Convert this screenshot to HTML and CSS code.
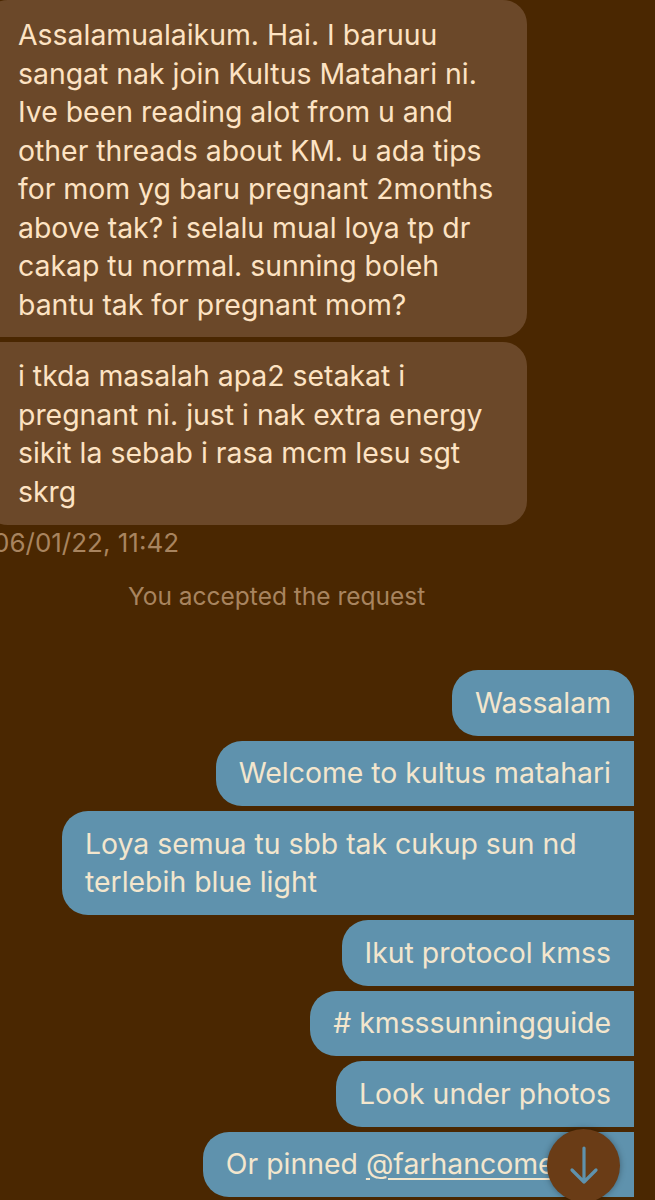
FILE: index.html
```html
<!DOCTYPE html>
<html>
<head>
<meta charset="utf-8">
<link rel="stylesheet" href="styles.css">
</head>
<body>
<div class="screen">
  <div class="recv-group">
    <div class="bubble recv first">Assalamualaikum. Hai. I baruuu<br>sangat nak join Kultus Matahari ni.<br>Ive been reading alot from u and<br>other threads about KM. u ada tips<br>for mom yg baru pregnant 2months<br>above tak? i selalu mual loya tp dr<br>cakap tu normal. sunning boleh<br>bantu tak for pregnant mom?</div>
    <div class="bubble recv last">i tkda masalah apa2 setakat i<br>pregnant ni. just i nak extra energy<br>sikit la sebab i rasa mcm lesu sgt<br>skrg</div>
  </div>
  <div class="timestamp">06/01/22, 11:42</div>
  <div class="notice">You accepted the request</div>
  <div class="sent-group">
    <div class="bubble sent first">Wassalam</div>
    <div class="bubble sent">Welcome to kultus matahari</div>
    <div class="bubble sent wide">Loya semua tu sbb tak cukup sun nd<br>terlebih blue light</div>
    <div class="bubble sent">Ikut protocol kmss</div>
    <div class="bubble sent"># kmsssunningguide</div>
    <div class="bubble sent">Look under photos</div>
    <div class="bubble sent">Or pinned <span class="link">@farhancomedyy.</span></div>
  </div>
  <button class="scroll-down" aria-label="Scroll down">
    <svg width="40" height="40" viewBox="0 0 40 40"><path d="M20 2 V36 M8 24 L20 36 L32 24" fill="none" stroke="#5f92ad" stroke-width="3.2" stroke-linecap="round" stroke-linejoin="round"/></svg>
  </button>
</div>
</body>
</html>
```
FILE: styles.css
```css
html, body {
  margin: 0;
  padding: 0;
  background: #4a2701;
}
.screen {
  position: relative;
  width: 655px;
  height: 1200px;
  overflow: hidden;
  background: #4a2701;
  font-family: "Inter", "Liberation Sans", sans-serif;
  font-size: 28.4px;
  line-height: 38.5px;
}
.bubble {
  box-sizing: border-box;
  white-space: nowrap;
}
.recv-group {
  display: flex;
  flex-direction: column;
  align-items: flex-start;
  gap: 5px;
  margin-left: -16px;
}
.recv {
  width: 543px;
  background: #6b4829;
  color: #fde3c3;
  padding: 15px 20px 14px 34px;
  border-radius: 24px;
}
.recv.first {
  padding-top: 16px;
  padding-bottom: 13px;
  border-bottom-left-radius: 0;
}
.recv.last {
  border-top-left-radius: 0;
}
.timestamp {
  margin-top: 3px;
  margin-left: -7px;
  color: #a8845f;
  font-size: 26px;
  line-height: 30px;
}
.notice {
  margin-top: 23px;
  padding-left: 128px;
  color: #a8845f;
  font-size: 24.5px;
  line-height: 30px;
}
.sent-group {
  margin-top: 59px;
  display: flex;
  flex-direction: column;
  align-items: flex-end;
  gap: 5px;
  padding-right: 21px;
}
.sent {
  background: #5f92ad;
  color: #f3e6cd;
  padding: 13.5px 23px;
  border-radius: 26px 0 0 26px;
}
.sent.first {
  border-top-right-radius: 26px;
}
.sent.wide {
  width: 572px;
}
.link {
  text-decoration: underline;
  text-underline-offset: 4px;
  text-decoration-thickness: 2px;
}
.scroll-down {
  position: absolute;
  left: 547px;
  top: 1129px;
  width: 73px;
  height: 73px;
  border: none;
  border-radius: 50%;
  background: #6a3c16;
  box-shadow: 0 0 6px rgba(0,0,0,0.35);
  display: flex;
  align-items: center;
  justify-content: center;
  padding: 0;
}
```
